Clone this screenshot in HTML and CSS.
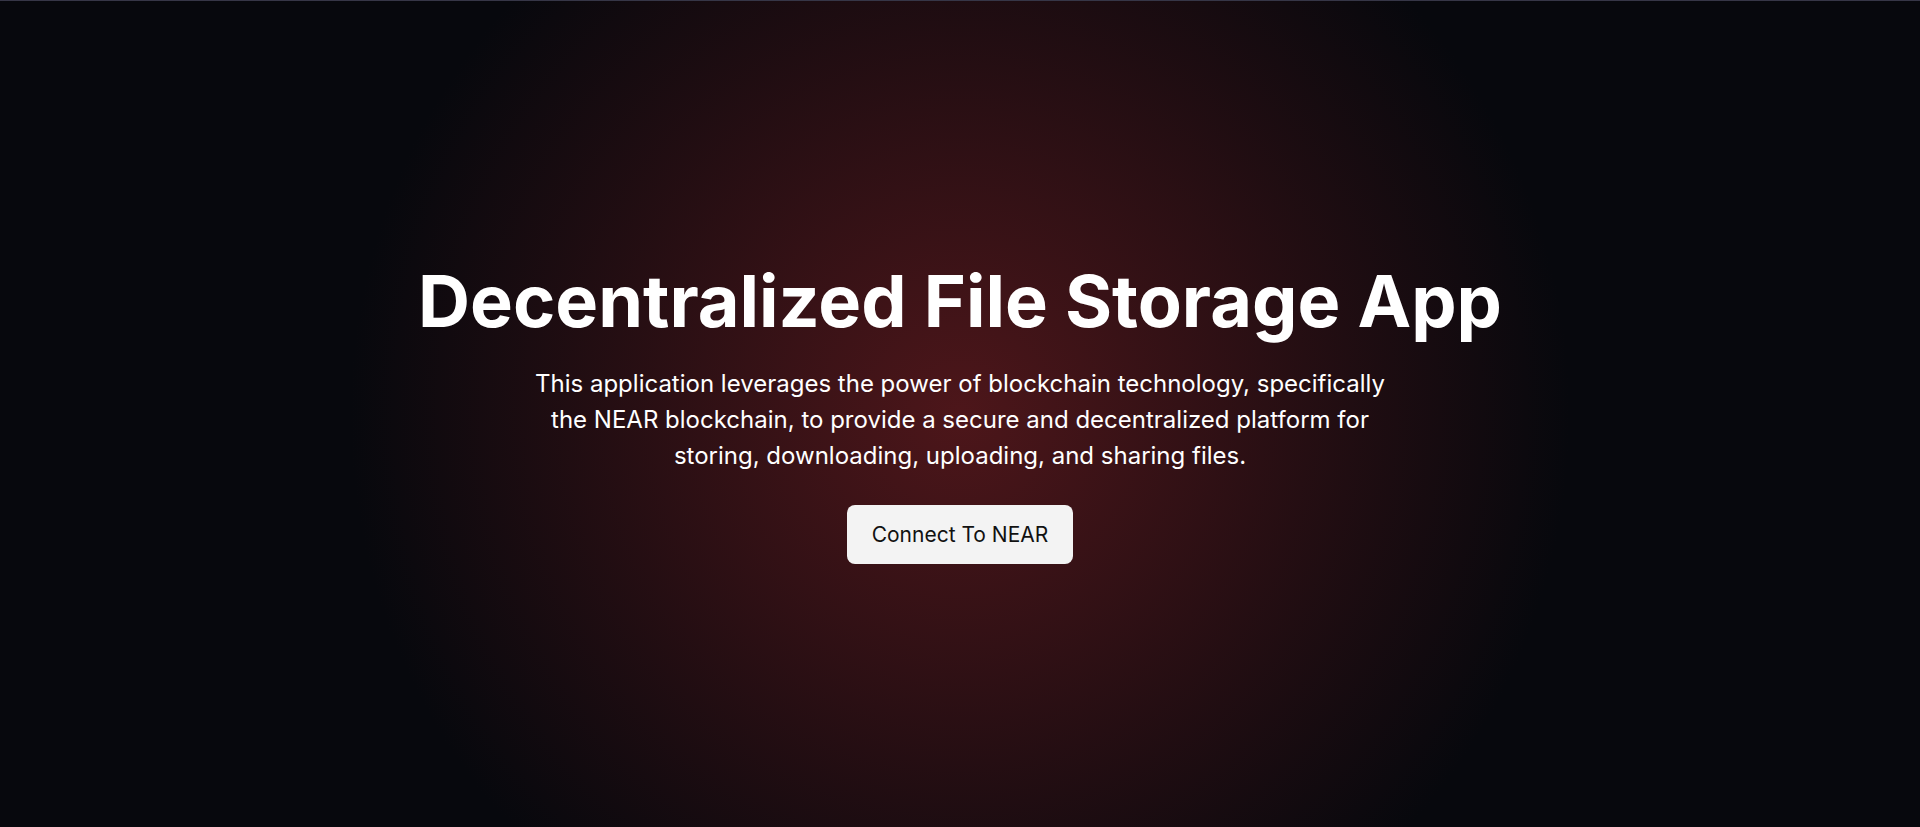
FILE: index.html
```html
<!DOCTYPE html>
<html lang="en">
<head>
<meta charset="utf-8">
<title>Decentralized File Storage App</title>
<link rel="stylesheet" href="styles.css">
</head>
<body>
<main class="hero">
  <div class="hero-content">
    <h1 class="hero-title">Decentralized File Storage App</h1>
    <p class="hero-text">This application leverages the power of blockchain technology, specifically the NEAR blockchain, to provide a secure and decentralized platform for storing, downloading, uploading, and sharing files.</p>
    <button class="connect-btn" type="button">Connect To NEAR</button>
  </div>
</main>
</body>
</html>
```
FILE: styles.css
```css
* { box-sizing: border-box; }
html, body { margin: 0; padding: 0; height: 100%; }
body {
  font-family: Inter, "Noto Sans", sans-serif;
  background: #07080d;
  color: #fff;
  overflow: hidden;
}
.hero {
  min-height: 100vh;
  border-top: 1px solid #363647;
  background: radial-gradient(circle 610px at 50% 50%, #4d161a 0%, #07080d 100%);
  display: flex;
  align-items: center;
  justify-content: center;
}
.hero-content {
  display: flex;
  flex-direction: column;
  align-items: center;
  text-align: center;
}
.hero-title {
  margin: 0;
  font-size: 72px;
  line-height: 1;
  font-weight: 700;
}
.hero-text {
  margin: 29px 0 0;
  max-width: 870px;
  font-size: 24px;
  line-height: 36px;
  font-weight: 400;
}
.connect-btn {
  margin-top: 31px;
  font-family: Inter, "Noto Sans", sans-serif;
  font-size: 21px;
  line-height: 27px;
  padding: 16px 25px;
  color: #111;
  background: #f3f3f3;
  border: 0;
  border-radius: 8px;
  cursor: pointer;
}
```
